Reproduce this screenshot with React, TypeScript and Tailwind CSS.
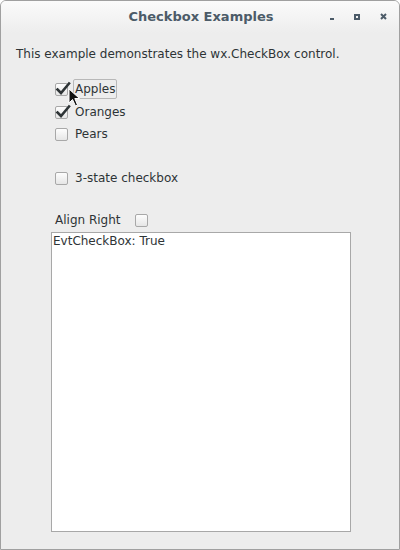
import React from 'react';

const font = { fontFamily: '"DejaVu Sans", Verdana, sans-serif' };

function Box({ checked }: { checked?: boolean }) {
  return (
    <span className="relative inline-block h-[13px] w-[13px] shrink-0 rounded-[2px] border border-[#a8a8a8] bg-gradient-to-b from-[#fdfdfd] to-[#e6e6e6]">
      {checked && (
        <svg className="absolute -left-[1px] -top-[3px]" width="16" height="16" viewBox="0 0 16 16">
          <path d="M2.5 8.5 L6 12 L14 2.5" fill="none" stroke="#2e3436" strokeWidth="2.6" strokeLinecap="square" />
        </svg>
      )}
    </span>
  );
}

function Row({ label, checked, focus, className }: { label: string; checked?: boolean; focus?: boolean; className?: string }) {
  return (
    <div className={`flex items-center gap-[7px] pl-[54px] ${className ?? ''}`}>
      <Box checked={checked} />
      <span
        className={`leading-[16px] ${focus ? '-ml-[2px] rounded-[2px] border border-[#b8b8b8] px-[1px] py-[1px]' : ''}`}
      >
        {label}
      </span>
    </div>
  );
}

export default function App() {
  return (
    <div style={font} className="h-[550px] w-[400px] overflow-hidden rounded-t-[6px] border border-[#a0a0a0] bg-[#ededed] text-[12px] text-[#2e3436]">
      <div className="relative flex h-[32px] items-center justify-center bg-gradient-to-b from-[#fbfbfb] to-[#ededed]">
        <span className="pl-[2px] text-[13px] font-bold text-[#4c5b68]">Checkbox Examples</span>
        <div className="absolute right-[12px] top-[12px] flex items-center gap-[20px]">
          <span className="mt-[5px] h-[2px] w-[4px] bg-[#4c5b68]" />
          <span className="h-[6px] w-[6px] border-2 border-[#4c5b68]" />
          <svg width="7" height="7" viewBox="0 0 7 7">
            <path d="M1 1 L6 6 M6 1 L1 6" stroke="#4c5b68" strokeWidth="2" />
          </svg>
        </div>
      </div>

      <div className="relative pt-[13px]">
        <p className="pl-[15px] leading-[16px]">This example demonstrates the wx.CheckBox control.</p>

        <div className="mt-[17px]">
          <Row label="Apples" checked focus />
          <Row label="Oranges" checked className="mt-[5px]" />
          <Row label="Pears" className="mt-[6px]" />
          <Row label="3-state checkbox" className="mt-[28px]" />
        </div>

        <div className="mt-[26px] flex items-center gap-[14px] pl-[54px]">
          <span className="leading-[16px]">Align Right</span>
          <Box />
        </div>

        <div className="ml-[50px] mt-[4px] h-[300px] w-[300px] border border-[#a8a8a8] bg-white px-[1px] leading-[16px]">
          EvtCheckBox: True
        </div>

        <svg className="absolute left-[67px] top-[55px]" width="14" height="20" viewBox="0 0 14 20">
          <path d="M1 1 L1 15 L4.5 11.5 L7.5 18 L9.5 17 L6.8 10.5 L11.5 10.5 Z" fill="#111" stroke="#fff" strokeWidth="1" strokeLinejoin="round" />
        </svg>
      </div>
    </div>
  );
}
